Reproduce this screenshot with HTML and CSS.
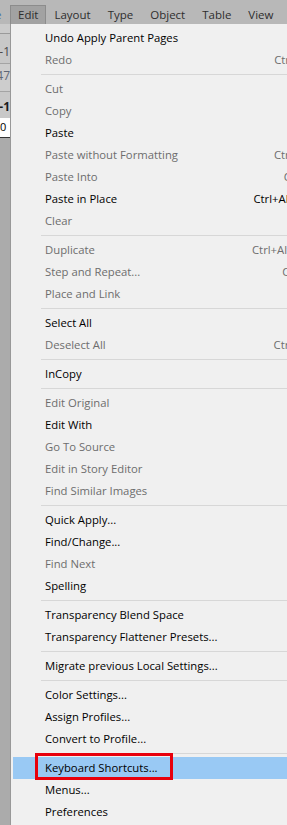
FILE: index.html
```html
<!DOCTYPE html>
<html lang="en">
<head>
  <meta charset="UTF-8">
  <title>Edit menu</title>
  <link rel="stylesheet" href="styles.css">
</head>
<body>

  <div class="bar">
    <span class="top cut-off">e</span>
    <span class="top active">Edit</span>
    <span class="top">Layout</span>
    <span class="top">Type</span>
    <span class="top">Object</span>
    <span class="top">Table</span>
    <span class="top">View</span>
  </div>

  <div class="main">
    <div class="side">
      <div class="side-head"></div>
      <div class="side-row r1"><span>-1</span></div>
      <div class="side-row r2"><span>47</span></div>
      <div class="side-row r3"><span>d-1</span></div>
      <div class="side-ruler">0</div>
    </div>

    <div class="menu">
      <div class="item">Undo Apply Parent Pages</div>
      <div class="item off">Redo <span class="key">Ctrl+Shift+Z</span></div>
      <div class="sep"></div>
      <div class="item off">Cut</div>
      <div class="item off">Copy</div>
      <div class="item">Paste</div>
      <div class="item off">Paste without Formatting <span class="key">Ctrl+Shift+V</span></div>
      <div class="item off">Paste Into <span class="key dot">Ctrl+Alt+V</span></div>
      <div class="item">Paste in Place <span class="key">Ctrl+Alt+Shift+V</span></div>
      <div class="item off">Clear</div>
      <div class="sep"></div>
      <div class="item off">Duplicate <span class="key">Ctrl+Alt+Shift+D</span></div>
      <div class="item off">Step and Repeat... <span class="key">Ctrl+Alt+U</span></div>
      <div class="item off">Place and Link</div>
      <div class="sep"></div>
      <div class="item">Select All</div>
      <div class="item off">Deselect All <span class="key">Ctrl+Shift+A</span></div>
      <div class="sep"></div>
      <div class="item">InCopy</div>
      <div class="sep"></div>
      <div class="item off">Edit Original</div>
      <div class="item">Edit With</div>
      <div class="item off">Go To Source</div>
      <div class="item off">Edit in Story Editor</div>
      <div class="item off">Find Similar Images</div>
      <div class="sep"></div>
      <div class="item">Quick Apply...</div>
      <div class="item">Find/Change...</div>
      <div class="item off">Find Next</div>
      <div class="item">Spelling</div>
      <div class="sep"></div>
      <div class="item">Transparency Blend Space</div>
      <div class="item">Transparency Flattener Presets...</div>
      <div class="sep"></div>
      <div class="item">Migrate previous Local Settings...</div>
      <div class="sep"></div>
      <div class="item">Color Settings...</div>
      <div class="item">Assign Profiles...</div>
      <div class="item">Convert to Profile...</div>
      <div class="sep"></div>
      <div class="item hot">Keyboard Shortcuts...<span class="mark"></span></div>
      <div class="item">Menus...</div>
      <div class="item">Preferences</div>
    </div>
  </div>

</body>
</html>
```

FILE: styles.css
```css
* {
  box-sizing: border-box;
}

html, body {
  margin: 0;
  padding: 0;
  width: 287px;
  height: 825px;
  overflow: hidden;
  background: #ababab;
  font-family: "Open Sans", "Noto Sans", sans-serif;
  font-size: 11.3px;
}

.bar {
  height: 24px;
  display: flex;
  align-items: flex-end;
  background: #b8b8b8;
  padding-left: 10px;
  position: relative;
  overflow: hidden;
}

.top {
  height: 19px;
  line-height: 18px;
  padding: 0 7px;
  margin-right: 1px;
  color: #2e2e2e;
  font-size: 11.5px;
  border: 1px solid transparent;
  border-bottom: 0;
}

.top.cut-off {
  position: absolute;
  left: -6px;
  bottom: 0;
  padding: 0;
  color: #3d6fa6;
}

.top.active {
  background: #a2a2a2;
  border-color: #8c8c8c;
  margin-right: 0;
}

.main {
  display: flex;
}

.side {
  width: 10px;
  flex-shrink: 0;
  overflow: hidden;
  background: #ababab;
}

.side-head {
  height: 10px;
  background: #cbcbcb;
  border-bottom: 1px solid #9a9a9a;
}

.side-row {
  height: 30px;
  line-height: 30px;
  display: flex;
  justify-content: flex-end;
  white-space: nowrap;
  background: #c8c8c8;
  border-bottom: 1px solid #a4a4a4;
  color: #4a4a4a;
  font-size: 12px;
}

.side-row span {
  flex-shrink: 0;
}

.side-row.r1 {
  padding-top: 3px;
}

.side-row.r2 {
  height: 28px;
  line-height: 24px;
  background: #cdcdcd;
  color: #5d6676;
}

.side-row.r3 {
  height: 26px;
  line-height: 30px;
  color: #1a1a1a;
  font-weight: bold;
  border-bottom: 0;
}

.side-ruler {
  height: 20px;
  background: #ffffff;
  font-size: 11px;
  line-height: 18px;
  color: #000;
  border-bottom: 1px solid #333;
}

.menu {
  width: 360px;
  flex-shrink: 0;
  height: 801px;
  background: #f0f0f0;
  border-left: 1px solid #989898;
  padding-top: 3px;
}

.item {
  height: 22px;
  line-height: 22px;
  padding-left: 34px;
  padding-right: 34px;
  display: flex;
  color: #000;
  white-space: nowrap;
  position: relative;
}

.item.off {
  color: #6d6d6d;
}

.key {
  margin-left: auto;
}

.item.hot {
  margin-left: 2px;
  padding-left: 32px;
  background: #99c9f4;
}

.mark {
  position: absolute;
  left: 22px;
  top: -4px;
  width: 138px;
  height: 27px;
  border: 3px solid #e8000c;
}

.sep {
  height: 7px;
  padding-top: 3px;
  margin-left: 30px;
}

.sep::after {
  content: "";
  display: block;
  height: 1px;
  background: #d7d7d7;
}
```
